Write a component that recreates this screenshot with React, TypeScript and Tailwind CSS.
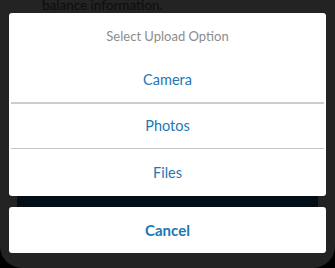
export default function App() {
  const options = ['Camera', 'Photos', 'Files']

  return (
    <div className="w-[335px] h-[268px] bg-black overflow-hidden" style={{ fontFamily: 'Lato, "Open Sans", sans-serif' }}>
      <div className="relative h-full bg-[#232323] rounded-b-[22px] overflow-hidden">
        {/* page behind the overlay */}
        <div className="flex flex-col">
          <p className="pl-[42px] -mt-[2px] text-[13.5px] leading-[15px] text-[#0d0d0d]">balance information.</p>
          <div className="mx-[17px] mt-[179px] h-[44px] bg-[#030e17]" />
        </div>

        {/* action sheet */}
        <div className="absolute inset-0 flex flex-col gap-[11px] px-[9px] pt-[13px]">
          <div className="flex flex-col bg-white rounded-[3px]">
            <div className="h-[44px] flex items-center justify-center pt-[4px] text-[13px] text-[#8c8c8c]">
              Select Upload Option
            </div>
            {options.map((opt, i) => (
              <div key={opt} className="flex flex-col">
                {i === 1 && <div className="mx-[2px] h-[2px] bg-[#cdcdcd]" />}
                {i === 2 && <div className="mx-[2px] h-px bg-[#c6c6c6]" />}
                <div
                  className={
                    i === 0
                      ? 'h-[45px] flex items-center justify-center text-[14.5px] text-[#1b78b4]'
                      : i === 1
                        ? 'h-[44px] flex items-center justify-center text-[14.5px] text-[#1b78b4]'
                        : 'h-[47px] flex items-center justify-center text-[14.5px] text-[#1b78b4]'
                  }
                >
                  {opt}
                </div>
              </div>
            ))}
          </div>
          <div className="h-[46px] flex items-center justify-center bg-white rounded-[3px] text-[15px] font-bold text-[#1b78b4]">
            Cancel
          </div>
        </div>
      </div>
    </div>
  )
}
